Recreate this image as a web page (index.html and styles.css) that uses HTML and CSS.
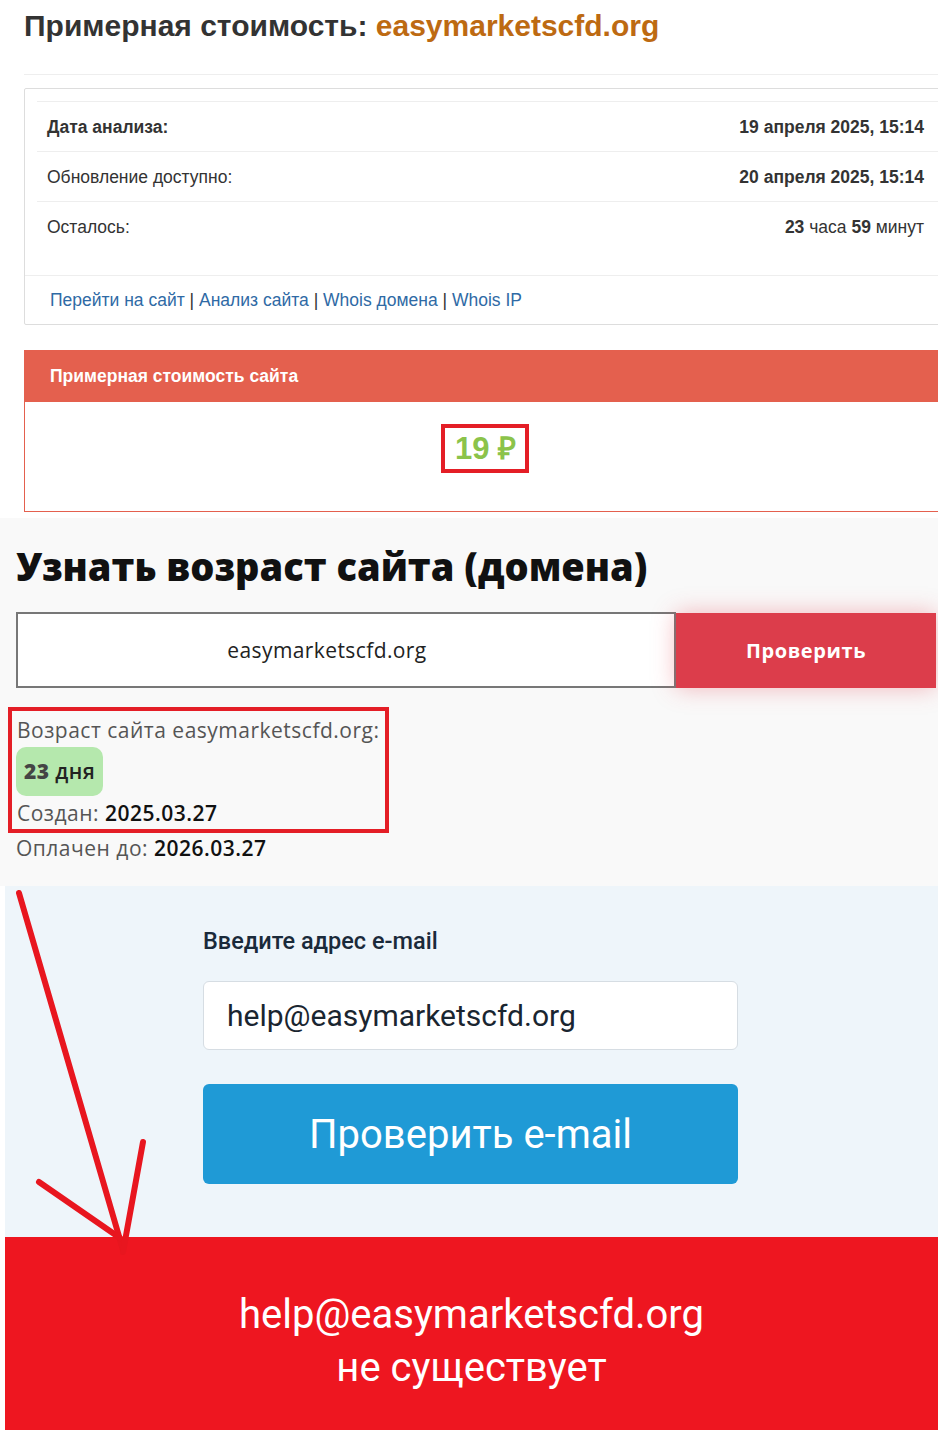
FILE: index.html
```html
<!DOCTYPE html>
<html lang="ru">
<head>
  <meta charset="UTF-8" />
  <title>Примерная стоимость: easymarketscfd.org</title>
  <link rel="stylesheet" href="styles.css">
</head>
<body>
  <div class="page">

    <section class="cost">
      <div class="cost-head">
        <h1>Примерная стоимость: <span class="domain">easymarketscfd.org</span></h1>
      </div>

      <div class="info-box">
        <div class="info-table">
          <div class="info-row">
            <b>Дата анализа:</b>
            <b>19 апреля 2025, 15:14</b>
          </div>
          <div class="info-row">
            <span>Обновление доступно:</span>
            <b>20 апреля 2025, 15:14</b>
          </div>
          <div class="info-row">
            <span>Осталось:</span>
            <span><b>23</b> часа <b>59</b> минут</span>
          </div>
        </div>
        <div class="info-links">
          <a href="#">Перейти на сайт</a> | <a href="#">Анализ сайта</a> | <a href="#">Whois домена</a> | <a href="#">Whois IP</a>
        </div>
      </div>

      <div class="price-panel">
        <div class="price-title">Примерная стоимость сайта</div>
        <div class="price-body">
          <span class="price">19 ₽</span>
        </div>
      </div>
    </section>

    <section class="age">
      <h2>Узнать возраст сайта (домена)</h2>
      <div class="age-form">
        <div class="age-input">easymarketscfd.org</div>
        <button class="age-btn">Проверить</button>
      </div>
      <div class="age-result">
        <div class="age-line">Возраст сайта easymarketscfd.org:</div>
        <div class="age-badge"><b>23</b> дня</div>
        <div class="age-line">Создан: <span class="age-date">2025.03.27</span></div>
      </div>
      <div class="age-line">Оплачен до: <span class="age-date">2026.03.27</span></div>
    </section>

    <section class="mail">
      <div class="mail-form">
        <div class="mail-label">Введите адрес e-mail</div>
        <div class="mail-input">help@easymarketscfd.org</div>
        <button class="mail-btn">Проверить e-mail</button>
      </div>
    </section>

    <section class="mail-result">
      <div>help@easymarketscfd.org</div>
      <div>не существует</div>
    </section>

    <svg class="arrow" width="938" height="1430" viewBox="0 0 938 1430">
      <g fill="none" stroke="#e8161f" stroke-width="6" stroke-linecap="round">
        <path d="M19 893 L123 1250" />
        <path d="M39 1182 L120 1238" />
        <path d="M143 1142 L123 1252" />
      </g>
    </svg>
  </div>
</body>
</html>
```

FILE: styles.css
```css
body { margin: 0; background: #fff; overflow-x: hidden; }
.page { position: relative; width: 938px; }

/* site price */
.cost {
  font-family: "Liberation Sans", Arial, sans-serif;
  color: #333;
  padding: 0 0 6px 24px;
}
.cost-head { border-bottom: 1px solid #eee; height: 74px; }
.cost-head h1 {
  margin: 0;
  padding-top: 8px;
  line-height: 36px;
  font-size: 30px;
  font-weight: bold;
  color: #333;
}
.cost-head .domain { color: #bd6a12; }

.info-box {
  margin-top: 13px;
  width: 916px;
  border: 1px solid #ddd;
  border-radius: 2px;
}
.info-table { padding: 12px 0 24px 12px; }
.info-row {
  display: flex;
  justify-content: space-between;
  border-top: 1px solid #eee;
  padding: 15px 17px 14px 10px;
  line-height: 20px;
  font-size: 17.5px;
}
.info-links {
  border-top: 1px solid #eee;
  padding: 14px 25px;
  line-height: 20px;
  font-size: 17.5px;
}
.info-links a { color: #2f6aa5; text-decoration: none; }

.price-panel { margin-top: 25px; width: 916px; }
.price-title {
  background: #e4604e;
  color: #fff;
  font-weight: bold;
  font-size: 17.5px;
  line-height: 52px;
  padding-left: 26px;
}
.price-body {
  border: 1px solid #e4604e;
  border-top: none;
  text-align: center;
  padding: 22px 0 38px 6px;
}
.price {
  display: inline-block;
  border: 4px solid #e41e26;
  padding: 4px 9px 4px 10px;
  line-height: 33px;
  font-size: 31px;
  font-weight: bold;
  color: #8bc34a;
}

/* domain age */
.age {
  background: #f9f9f9;
  padding: 25px 0 23px 16px;
  font-family: "Open Sans", sans-serif;
}
.age h2 {
  margin: 0 0 23px;
  line-height: 46px;
  font-size: 38px;
  font-weight: 800;
  color: #111;
}
.age-form { display: flex; height: 76px; }
.age-input {
  width: 660px;
  box-sizing: border-box;
  border: 2px solid #777;
  background: #fff;
  text-align: center;
  padding-right: 38px;
  line-height: 72px;
  font-size: 21px;
  letter-spacing: 0.4px;
  color: #222;
}
.age-btn {
  width: 260px;
  margin-top: 1px;
  border: none;
  background: #dc3d4b;
  color: #fff;
  font-family: "Open Sans", sans-serif;
  font-weight: bold;
  font-size: 20px;
  letter-spacing: 0.6px;
  box-shadow: 0 0 22px rgba(228, 60, 75, 0.35);
}
.age-result {
  display: inline-block;
  margin: 19px 0 0 -8px;
  padding: 0 6px 1px 5px;
  border: 4px solid #e41e26;
}
.age-line {
  line-height: 30px;
  font-size: 21px;
  letter-spacing: 0.5px;
  color: #555;
}
.age-result .age-line:first-child { margin-top: 4px; }
.age-date { color: #111; font-weight: 600; }
.age-badge {
  display: inline-block;
  margin: 2px 0 2px -1px;
  background: #b5e8ad;
  border-radius: 10px;
  padding: 0 8px;
  line-height: 49px;
  font-size: 21px;
  font-weight: 600;
  letter-spacing: 0.4px;
  color: #222;
}
.age-badge b { color: #444; }

/* e-mail check */
.mail {
  margin-left: 5px;
  background: #eef5fa;
  padding: 40px 0 53px 198px;
  font-family: Roboto, sans-serif;
}
.mail-form { width: 535px; }
.mail-label {
  line-height: 30px;
  font-size: 23.5px;
  font-weight: 500;
  color: #1a2a3a;
}
.mail-input {
  margin-top: 25px;
  height: 69px;
  box-sizing: border-box;
  background: #fff;
  border: 1px solid #d6dde3;
  border-radius: 6px;
  padding-left: 23px;
  line-height: 67px;
  font-size: 30px;
  color: #1a2530;
}
.mail-btn {
  display: block;
  margin-top: 34px;
  width: 100%;
  height: 100px;
  border: none;
  border-radius: 6px;
  background: #1f9ad6;
  color: #fff;
  font-family: Roboto, sans-serif;
  font-size: 40px;
}
.mail-result {
  margin-left: 5px;
  background: #ee1620;
  color: #fff;
  text-align: center;
  padding: 51px 0 36px;
  font-family: Roboto, sans-serif;
  font-size: 40px;
  line-height: 53px;
}

.arrow { position: absolute; left: 0; top: 0; pointer-events: none; }
```
